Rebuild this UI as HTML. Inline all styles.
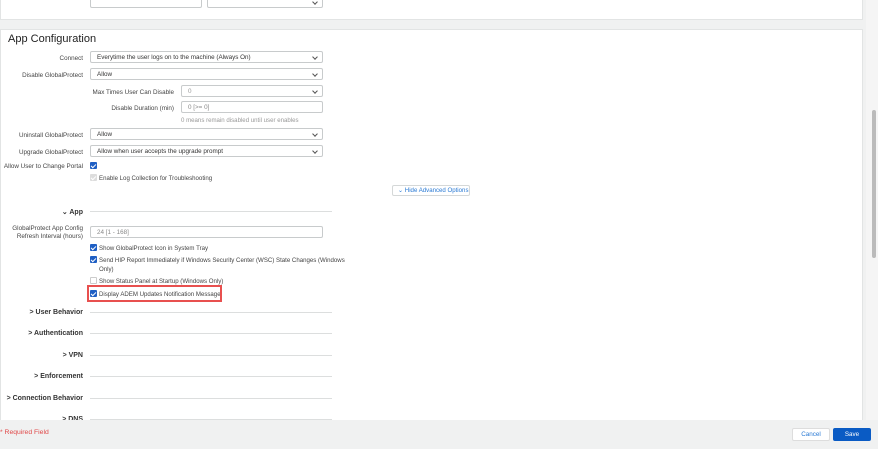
<html><head><style>
*{margin:0;padding:0;box-sizing:border-box}
body{width:878px;height:449px;overflow:hidden;background:#f0f1f1;font-family:"Liberation Sans",sans-serif;position:relative;color:#333}
.a{position:absolute}
.card{background:#fff;border:1px solid #e2e4e4}
.lbl{position:absolute;font-size:6.3px;color:#444;text-align:right;white-space:nowrap}
.sel{position:absolute;height:12px;border:1px solid #c8cbcc;border-radius:2px;background:#fff;font-size:6.3px;line-height:11px;padding-left:6px;color:#333}
.sel.dd:after{content:"";position:absolute;right:5px;top:3px;width:3px;height:3px;border-right:1px solid #555;border-bottom:1px solid #555;transform:rotate(45deg)}
.cb{position:absolute;width:7px;height:7px;border-radius:1px;background:#1f5fc4}
.cb:after{content:"";position:absolute;left:2px;top:0.5px;width:2px;height:4px;border-right:1px solid #fff;border-bottom:1px solid #fff;transform:rotate(45deg)}
.cb.off{background:#fff;border:1px solid #ccc}.cb.off:after{display:none}
.cb.dis{background:#ddd}
.t{position:absolute;font-size:6.1px;color:#444;white-space:nowrap}
.sec{position:absolute;font-size:7px;font-weight:bold;color:#333;text-align:right;white-space:nowrap;right:795px}
.ln{position:absolute;left:90px;width:242px;height:1px;background:#dcdede}
</style></head><body>
<div class="a card" style="left:0;top:-2px;width:863px;height:22px"></div>
<div class="sel" style="left:90px;top:-4px;width:112px"></div>
<div class="sel dd" style="left:207px;top:-4px;width:116px"></div>
<div class="a card" style="left:0;top:29px;width:863px;height:393px"></div>
<div class="a" style="left:866px;top:0;width:12px;height:420px;background:#f5f5f5"></div>
<div class="a" style="left:872px;top:110px;width:4px;height:148px;background:#bbb;border-radius:2px"></div>
<div class="a" style="left:8px;top:33px;font-size:11px;color:#222">App Configuration</div>

<div class="lbl" style="right:795px;top:55px">Connect</div>
<div class="sel dd" style="left:90px;top:51px;width:233px">Everytime the user logs on to the machine (Always On)</div>
<div class="lbl" style="right:795px;top:72px">Disable GlobalProtect</div>
<div class="sel dd" style="left:90px;top:68px;width:233px">Allow</div>
<div class="lbl" style="right:704px;top:89px">Max Times User Can Disable</div>
<div class="sel dd" style="left:181px;top:85px;width:142px;color:#999">0</div>
<div class="lbl" style="right:704px;top:105px">Disable Duration (min)</div>
<div class="sel" style="left:181px;top:101px;width:142px;color:#888">0 [>= 0]</div>
<div class="t" style="left:181px;top:117px;color:#999">0 means remain disabled until user enables</div>
<div class="lbl" style="right:795px;top:132px">Uninstall GlobalProtect</div>
<div class="sel dd" style="left:90px;top:128px;width:233px">Allow</div>
<div class="lbl" style="right:795px;top:149px">Upgrade GlobalProtect</div>
<div class="sel dd" style="left:90px;top:145px;width:233px">Allow when user accepts the upgrade prompt</div>
<div class="lbl" style="right:795px;top:163px">Allow User to Change Portal</div>
<div class="cb" style="left:90px;top:162px"></div>
<div class="cb dis" style="left:90px;top:174px"></div>
<div class="t" style="left:99px;top:175px">Enable Log Collection for Troubleshooting</div>
<div class="a" style="left:392px;top:185px;width:78px;height:11px;border:1px solid #d5d8d8;border-radius:2px;font-size:6.1px;color:#2a7ad4;line-height:9px;padding-left:5px;white-space:nowrap">⌄ Hide Advanced Options</div>

<div class="sec" style="top:208px">⌄ App</div><div class="ln" style="top:211px"></div>
<div class="lbl" style="right:795px;top:225px;line-height:8px">GlobalProtect App Config<br>Refresh Interval (hours)</div>
<div class="sel" style="left:90px;top:226px;width:233px;color:#888">24 [1 - 168]</div>
<div class="cb" style="left:90px;top:244px"></div><div class="t" style="left:99px;top:245px">Show GlobalProtect Icon in System Tray</div>
<div class="cb" style="left:90px;top:256px"></div><div class="t" style="left:99px;top:257px;line-height:8.5px">Send HIP Report Immediately if Windows Security Center (WSC) State Changes (Windows<br>Only)</div>
<div class="cb off" style="left:90px;top:277px"></div><div class="t" style="left:99px;top:278px">Show Status Panel at Startup (Windows Only)</div>
<div class="cb" style="left:90px;top:290px"></div><div class="t" style="left:99px;top:291px">Display ADEM Updates Notification Message</div>
<div class="a" style="left:87px;top:285px;width:135px;height:17px;border:2px solid #e8504f"></div>

<div class="sec" style="top:309px">&gt; User Behavior</div><div class="ln" style="top:312px"></div>
<div class="sec" style="top:330px">&gt; Authentication</div><div class="ln" style="top:333px"></div>
<div class="sec" style="top:352px">&gt; VPN</div><div class="ln" style="top:355px"></div>
<div class="sec" style="top:373px">&gt; Enforcement</div><div class="ln" style="top:376px"></div>
<div class="sec" style="top:395px">&gt; Connection Behavior</div><div class="ln" style="top:398px"></div>
<div class="sec" style="top:416px">&gt; DNS</div><div class="ln" style="top:419px"></div>

<div class="a" style="left:0;top:420px;width:878px;height:29px;background:#f0f1f1"></div>
<div class="a" style="left:0;top:429px;font-size:6.8px;color:#e04848">* Required Field</div>
<div class="a" style="left:792px;top:428px;width:38px;height:13px;background:#fff;border:1px solid #ddd;border-radius:2px;font-size:6.3px;color:#2a7ad4;text-align:center;line-height:11px">Cancel</div>
<div class="a" style="left:833px;top:428px;width:38px;height:13px;background:#0a5bc4;border-radius:2px;font-size:6.3px;color:#fff;text-align:center;line-height:13px">Save</div>
</body></html>
